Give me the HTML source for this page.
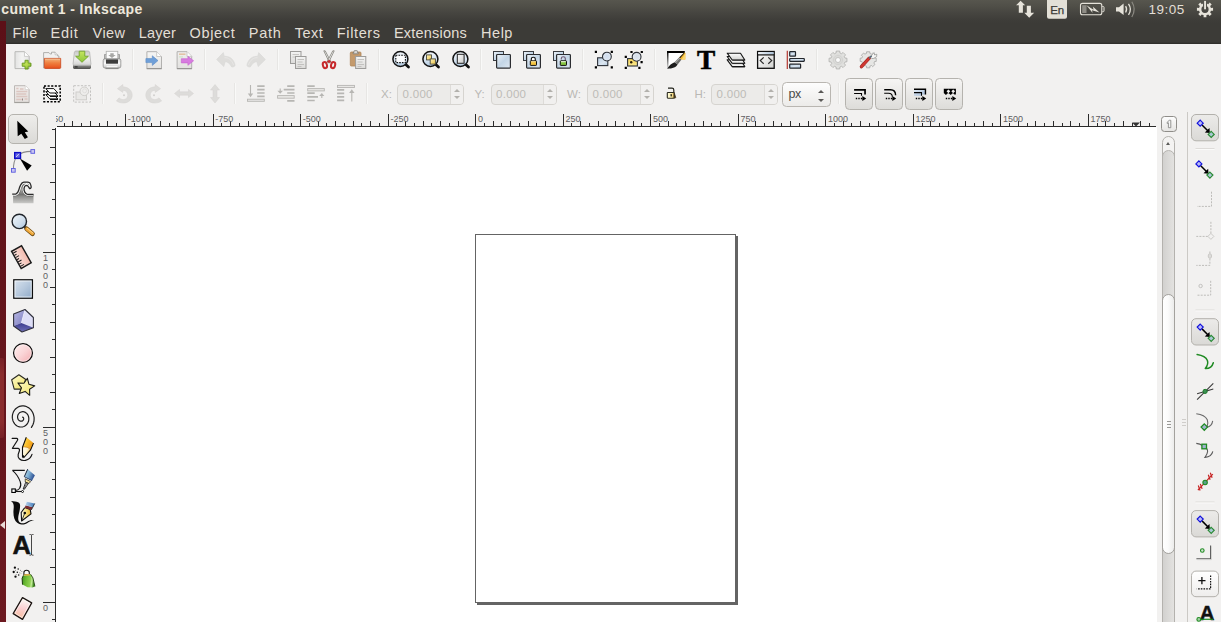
<!DOCTYPE html>
<html lang="en"><head><meta charset="utf-8"><title>Document 1 - Inkscape</title>
<style>
*{margin:0;padding:0;box-sizing:border-box}
html,body{width:1221px;height:622px;overflow:hidden;background:#f2f1f0;font-family:"Liberation Sans","DejaVu Sans",sans-serif}
body{position:relative}
#top{position:absolute;left:0;top:0;width:1221px;height:44px;background:linear-gradient(#57564e 0,#504f48 6px,#464540 13px,#3e3d39 20px,#3c3b37 23px,#3c3b37 42px,#33322f 43px,#2c2b28 44px);color:#dfdbd2;overflow:hidden}
#top .title{position:absolute;left:1.3px;top:0;font-size:14px;font-weight:bold;line-height:18px;color:#eee8dc;white-space:nowrap;letter-spacing:.4px}
#top .mi{position:absolute;top:24px;height:18px;line-height:18px;font-size:14.5px;color:#e3dfd6;white-space:nowrap}
#top .clock{position:absolute;left:1148.6px;top:0;font-size:13.5px;line-height:19px;color:#e3dfd6;letter-spacing:.45px}
#launcher{position:absolute;left:0;top:21px;width:6px;height:601px;background:linear-gradient(180deg,#5c1017,#6c1920)}
#launcher .gl{position:absolute;left:0;top:337px;width:3.5px;height:80px;border-radius:0 2px 2px 0;background:linear-gradient(#762026,#8a2c2d 20%,#8a2c2d 80%,#762026)}
#launcher .tri{position:absolute;left:0;top:499.5px;width:0;height:0;border-top:4px solid transparent;border-bottom:4px solid transparent;border-right:5px solid #e9dbd7}
#ledge{position:absolute;left:6px;top:44px;width:1px;height:578px;background:#f7eeee}
#tb{position:absolute;left:0;top:0;width:1221px;height:112px}
.ic{position:absolute;width:24px;height:24px}
.ic svg{display:block;width:24px;height:24px;overflow:visible}
.sep{position:absolute;width:1px;background:#e7e6e4;box-shadow:1px 0 0 #f9f9f8}
.lbl{position:absolute;top:87px;font-size:11.5px;line-height:14px;color:#bab8b4}
.spin{position:absolute;top:83.5px;height:21px;border:1px solid #d6d4d0;border-radius:4px;background:#ecebe9}
.spin .val{position:absolute;left:4.5px;top:3px;font-size:11.5px;line-height:13px;color:#bdbbb7;letter-spacing:.3px}
.spin .sp{position:absolute;right:0;top:0;width:13.5px;height:19px;border-left:1px solid #dddbd8;background:#f1f0ef;border-radius:0 3px 3px 0}
.up,.dn{position:absolute;width:0;height:0;border-left:2.5px solid transparent;border-right:2.5px solid transparent}
.spin .up{left:3.8px;top:4.2px;border-left:3.2px solid transparent;border-right:3.2px solid transparent;border-bottom:3.8px solid #b3b1ad}
.spin .dn{left:3.8px;top:11.8px;border-left:3.2px solid transparent;border-right:3.2px solid transparent;border-top:3.8px solid #b3b1ad}
.combo{position:absolute;top:82px;width:49px;height:24.5px;border:1px solid #b9b6b1;border-radius:4.5px;background:linear-gradient(#fdfdfd,#ecebe9)}
.combo span{position:absolute;left:6px;top:4px;font-size:12.5px;line-height:14px;color:#4a4a48;letter-spacing:-.5px}
.combo .up{left:35.3px;top:6.8px;border-left:3px solid transparent;border-right:3px solid transparent;border-bottom:3.6px solid #5a5957}
.combo .dn{left:35.3px;top:15.8px;border-left:3px solid transparent;border-right:3px solid transparent;border-top:3.6px solid #5a5957}
.tbtn{position:absolute;top:78px;width:28px;height:31.5px;border:1px solid #b5b3ae;border-radius:4.5px;background:linear-gradient(#f6f5f4,#dddcd9)}
.tbtn svg{position:absolute;left:-1px;top:-1px;width:28px;height:32px}
.selbtn{position:absolute;border:1px solid #b5b3ae;border-radius:5px;background:linear-gradient(#eeedeb,#dbdad7)}
#hr,#vr{position:absolute;display:block}
#hr text,#vr text{font-family:"Liberation Sans",sans-serif;font-size:9px;fill:#5e5e62}
#canvas{position:absolute;left:56px;top:127px;width:1101px;height:495px;background:#fff}
#page{position:absolute;left:419px;top:107px;width:261px;height:369px;border:1px solid #646464;box-shadow:2px 2px 0 #646464;background:#fff}
#zoombtn{position:absolute;left:1161px;top:116px;width:16px;height:16px;border:1px solid #8f8d89;border-radius:3.5px;background:linear-gradient(#fdfdfd,#e6e5e3)}
#zoombtn svg{position:absolute;left:-1px;top:-1px;width:16px;height:16px}
#vscroll{position:absolute;left:1162px;top:136px;width:13px;height:500px;border:1px solid #b4b2ae;border-radius:6.5px;background:#f4f3f2;overflow:hidden}
#trough{position:absolute;left:-1px;top:12.5px;width:13px;height:500px;border:1px solid #b4b2ae;border-radius:6.5px;background:linear-gradient(90deg,#d2d1cf,#e3e2e0)}
#vscroll .up{left:3px;top:4.8px;border-left-width:2.5px;border-right-width:2.5px;border-bottom:3px solid #5a5a58}
#thumb{position:absolute;left:1162px;top:294px;width:13px;height:259.5px;border:1px solid #a3a19d;border-radius:6.5px;background:linear-gradient(90deg,#ffffff,#fbfbfb 45%,#ececeb)}
#thumb i{position:absolute;left:3.5px;width:4px;height:1px;background:#9a9996}
#thumb i:nth-child(1){top:125.5px}#thumb i:nth-child(2){top:128.5px}#thumb i:nth-child(3){top:131.5px}
.vsep{position:absolute;width:1px;background:#cbc9c5}
#grip{position:absolute;left:1182px;top:419px}
#grip i{position:absolute;left:0;width:4px;height:1px;background:#cfcdca}
#grip i:nth-child(1){top:0}#grip i:nth-child(2){top:3px}#grip i:nth-child(3){top:6px}

</style></head>
<body>
<div id="top">
<span class="title">cument 1 - Inkscape</span>
<span class="mi" style="left:12.6px;letter-spacing:0.43px">File</span>
<span class="mi" style="left:50.5px;letter-spacing:0.8px">Edit</span>
<span class="mi" style="left:92.5px;letter-spacing:0.47px">View</span>
<span class="mi" style="left:138.8px;letter-spacing:0.18px">Layer</span>
<span class="mi" style="left:189.5px;letter-spacing:0.68px">Object</span>
<span class="mi" style="left:248.8px;letter-spacing:0.7px">Path</span>
<span class="mi" style="left:294.8px;letter-spacing:0.43px">Text</span>
<span class="mi" style="left:336.8px;letter-spacing:0.63px">Filters</span>
<span class="mi" style="left:394.0px;letter-spacing:0.19px">Extensions</span>
<span class="mi" style="left:481.1px;letter-spacing:0.5px">Help</span>
<svg id="ind" width="221" height="22" viewBox="1000 0 221 22" style="position:absolute;left:1000px;top:0;display:block"><path d="M1020.600 .8L1025.200 5.200H1022.900V12.700H1018.800V5.200H1016.100Z" fill="#e6e3da"/><path d="M1026.800 5.700H1030.900V12.700H1034.200L1029.200 17.700 1024.300 12.700H1026.800Z" fill="#e6e3da"/><path d="M1047 0H1067V16.700Q1067 18.700 1065 18.700H1049Q1047 18.700 1047 16.700Z" fill="#e3e0d7"/><text x="1057.100" y="13.600" text-anchor="middle" font-family="Liberation Sans,DejaVu Sans,sans-serif" font-size="11.500" fill="#3c3b37" stroke="#3c3b37" stroke-width=".25" letter-spacing="-.3">En</text><rect x="1080.500" y="3.400" width="21.300" height="11.400" rx="2" fill="none" stroke="#e6e3da" stroke-width="1.100"/><path d="M1102.300 6.500H1103.200Q1104 6.500 1104 7.300V10.900Q1104 11.700 1103.200 11.700H1102.300" fill="none" stroke="#e6e3da" stroke-width="1"/><rect x="1082.200" y="5.200" width="4.300" height="7.800" fill="#8e8c85"/><path d="M1086.500 5.200L1093.500 9.800 1093 6.800 1099.500 12.500 1092 10.200 1092.600 13Z" fill="#e6e3da"/><path d="M1116 7.200H1119L1123.600 3.600V15L1119 11.600H1116Z" fill="#e6e3da"/><path d="M1125.600 6.200Q1127.600 9.300 1125.600 12.500" fill="none" stroke="#e6e3da" stroke-width="1.300"/><path d="M1128.500 3.800Q1132.300 9.300 1128.500 14.900" fill="none" stroke="#e6e3da" stroke-width="1.300"/><path d="M1131.800 1.800Q1136.600 9.300 1131.800 17" fill="none" stroke="#8b8982" stroke-width="1.200"/><path d="M1203.93 3.29L1206.07 3.29L1206.35 3.35L1208.25 4.14L1209.69 2.57L1211.73 4.61L1210.16 6.05L1210.95 7.95L1213.07 7.86L1213.07 10.74L1210.95 10.65L1210.16 12.55L1211.73 13.99L1209.69 16.03L1208.25 14.46L1206.35 15.25L1206.44 17.37L1203.56 17.37L1203.65 15.25L1201.75 14.46L1200.31 16.03L1198.27 13.99L1199.84 12.55L1199.05 10.65L1196.93 10.74L1196.93 7.86L1199.05 7.95L1199.84 6.05L1198.27 4.61L1200.31 2.57L1201.75 4.14L1203.65 3.35ZM1208.600 9.300A3.600 3.600 0 1 0 1201.400 9.300A3.600 3.600 0 1 0 1208.600 9.300Z" fill="#e6e3da" fill-rule="evenodd"/><rect x="1203" y="0" width="4" height="6.500" fill="#56554e"/><rect x="1204.100" y=".9" width="1.900" height="8.400" fill="#e6e3da"/></svg>
<span class="clock">19:05</span>
</div>
<div id="launcher"><i class="gl"></i><i class="tri"></i></div><div id="ledge"></div>
<div id="tb">
<div class="ic" style="left:10px;top:48px"><svg viewBox="0 0 24 24"><defs><linearGradient id="gnw" x1="0" y1="0" x2="1" y2="0"><stop offset="0" stop-color="#e3e3e2"/><stop offset=".5" stop-color="#f4f4f3"/><stop offset="1" stop-color="#e6e6e5"/></linearGradient><radialGradient id="gnp" cx=".45" cy=".4" r=".6"><stop offset="0" stop-color="#c3e15c"/><stop offset=".7" stop-color="#a0cd3c"/><stop offset="1" stop-color="#6f9d24"/></radialGradient></defs>
<path d="M5 3.7H14.5L19.2 8.4V20.6H5Z" fill="url(#gnw)" stroke="#b9b9b7" stroke-width="1"/><path d="M14.5 3.7V8.4H19.2" fill="#fff" stroke="#c4c4c2" stroke-width=".8"/>
<path d="M15 12.3h3.2v2.8h2.8v3.2h-2.8v2.8H15v-2.8h-2.8v-3.2H15z" fill="url(#gnp)" stroke="#6c9a26" stroke-width=".9" stroke-linejoin="round"/></svg></div>
<div class="ic" style="left:40px;top:48px"><svg viewBox="0 0 24 24"><defs><linearGradient id="gop" x1="0" y1="0" x2="0" y2="1"><stop offset="0" stop-color="#f3b57e"/><stop offset=".45" stop-color="#ef8040"/><stop offset="1" stop-color="#e8501c"/></linearGradient></defs>
<path d="M3.6 20V4.6H9l1.2 1.4h1.3V4.2h3.6l2.6 2.6v1.2h1.2V20Z" fill="#f1f1f0" stroke="#a9a9a7" stroke-width=".9"/><path d="M15.1 4.2v2.6h2.6" fill="#fff" stroke="#b5b5b3" stroke-width=".7"/>
<path d="M4.4 10.4H20.7V19.6Q20.7 20.4 19.9 20.4H5.2Q4.4 20.4 4.4 19.6Z" fill="url(#gop)" stroke="#c8441a" stroke-width=".8"/><path d="M5 11.2H20" stroke="#f5c39a" stroke-width=".8"/></svg></div>
<div class="ic" style="left:70px;top:48px"><svg viewBox="0 0 24 24"><defs><linearGradient id="gsv" x1="0" y1="0" x2="0" y2="1"><stop offset="0" stop-color="#c9c9c8"/><stop offset=".6" stop-color="#eeeeed"/><stop offset="1" stop-color="#d6d6d5"/></linearGradient><linearGradient id="gsv2" x1="0" y1="0" x2="0" y2="1"><stop offset="0" stop-color="#9b9b99"/><stop offset="1" stop-color="#4e4e4c"/></linearGradient><linearGradient id="gsv3" x1="0" y1="0" x2="0" y2="1"><stop offset="0" stop-color="#c6e660"/><stop offset="1" stop-color="#8cc63a"/></linearGradient></defs>
<path d="M6 3H18Q19.3 3 19.6 4.2L21 16.5H3L4.4 4.2Q4.7 3 6 3Z" fill="url(#gsv)" stroke="#b4b4b2" stroke-width=".8"/>
<path d="M3 16.5H21V19.6Q21 20.9 19.7 20.9H4.3Q3 20.9 3 19.6Z" fill="url(#gsv2)"/><path d="M3.3 16.9H20.7" stroke="#e9e9e8" stroke-width=".9"/><path d="M4.6 18.9h3" stroke="#222" stroke-width="1"/>
<path d="M9.2 3.2h5.6v5h3.6L12 14.3 5.6 8.2h3.6z" fill="url(#gsv3)" stroke="#6fa32c" stroke-width=".9" stroke-linejoin="round"/></svg></div>
<div class="ic" style="left:100px;top:48px"><svg viewBox="0 0 24 24"><defs><linearGradient id="gpr" x1="0" y1="0" x2="0" y2="1"><stop offset="0" stop-color="#d8d8d7"/><stop offset=".5" stop-color="#fbfbfb"/><stop offset="1" stop-color="#c4c4c3"/></linearGradient></defs>
<path d="M4.5 6.5h2v-1h11v1h2V13h-15z" fill="#bdbdbb" stroke="#8a8a88" stroke-width=".7"/>
<rect x="6.2" y="3.3" width="11.6" height="9" fill="#fbfbfb" stroke="#b0b0ae" stroke-width=".8"/>
<path d="M10.3 5.2h3.4v1.9h2L12 9.9 8.3 7.100h2z" fill="#a7a7a5"/>
<rect x="3.2" y="10.700" width="17.600" height="9.300" rx="1.800" fill="url(#gpr)" stroke="#8c8c8a" stroke-width=".8"/>
<rect x="6" y="11.400" width="12" height="4.300" fill="#3d3d3c"/>
<path d="M5.500 20.500h13" stroke="#8b8b89" stroke-width="1.200"/><path d="M6.500 18.700h11" stroke="#fff" stroke-width="1"/></svg></div>
<i class="sep" style="left:132.0px;top:48.5px;height:21px"></i>
<div class="ic" style="left:142px;top:48px"><svg viewBox="0 0 24 24"><defs><linearGradient id="gim" x1="0" y1="0" x2="0" y2="1"><stop offset="0" stop-color="#f6f6f5"/><stop offset="1" stop-color="#e4e3e1"/></linearGradient></defs>
<path d="M4.900 3.700H14.700L19.500 8.500V20.600H4.900Z" fill="url(#gim)" stroke="#b2b1af" stroke-width="1"/><path d="M14.700 3.700V8.500H19.500" fill="#fff" stroke="#c0bfbd" stroke-width=".8"/><path d="M4.700 20.700H19.700" stroke="#8f8e8c" stroke-width="1"/>
<path d="M3.900 10.600h6.400V7.800l5.700 4.800-5.700 4.800v-2.800H3.900z" fill="#6f9fd8" stroke="#5d8cc6" stroke-width=".6" stroke-linejoin="round"/></svg></div>
<div class="ic" style="left:172.5px;top:48px"><svg viewBox="0 0 24 24"><defs><linearGradient id="gex" x1="0" y1="0" x2="0" y2="1"><stop offset="0" stop-color="#f1f0ee"/><stop offset="1" stop-color="#e2e1df"/></linearGradient></defs>
<path d="M4.100 3.700H14L18.700 8.400V20.600H4.100Z" fill="url(#gex)" stroke="#b2b1af" stroke-width="1"/><path d="M14 3.700V8.400H18.700" fill="#fff" stroke="#c0bfbd" stroke-width=".8"/><path d="M3.900 20.700H18.900" stroke="#8f8e8c" stroke-width="1"/>
<path d="M6 6.200h6.500" stroke="#e2c3a6" stroke-width="1.600"/><path d="M6 8.900h4" stroke="#cfe4c8" stroke-width="1.200"/>
<path d="M8.300 10.700h6.600V8.300l5.700 4.500-5.700 4.500v-2.400H8.300z" fill="#d87be0" stroke="#c462cf" stroke-width=".6" stroke-linejoin="round"/></svg></div>
<i class="sep" style="left:204.0px;top:48.5px;height:21px"></i>
<div class="ic" style="left:214px;top:48px"><svg viewBox="0 0 24 24"><path d="M2.600 11.500L9.300 4.600 10.300 8.300C13 8.300 15 8.800 16.500 9.800C19 11.500 20.500 14 21.100 17.200C21 18.500 19 19.300 17.600 18.900C16.500 17 15.500 15.600 14.500 14.900C13.500 14.200 12.500 13.800 11.200 13.700L9.800 18.600Z" fill="#dedddb" stroke="#d9d8d6" stroke-width=".6" stroke-linejoin="round"/><path d="M10.500 9.600C14.500 9.600 18 12 19.500 17" stroke="#e8e7e5" stroke-width=".9" fill="none"/></svg></div>
<div class="ic" style="left:244px;top:48px"><svg viewBox="0 0 24 24"><g transform="translate(24,0) scale(-1,1)"><path d="M2.600 11.500L9.300 4.600 10.300 8.300C13 8.300 15 8.800 16.500 9.800C19 11.500 20.500 14 21.100 17.200C21 18.500 19 19.300 17.600 18.900C16.500 17 15.500 15.600 14.500 14.900C13.500 14.200 12.500 13.800 11.200 13.700L9.800 18.600Z" fill="#dedddb" stroke="#d9d8d6" stroke-width=".6" stroke-linejoin="round"/><path d="M10.500 9.600C14.500 9.600 18 12 19.500 17" stroke="#e8e7e5" stroke-width=".9" fill="none"/></g></svg></div>
<i class="sep" style="left:276.5px;top:48.5px;height:21px"></i>
<div class="ic" style="left:286px;top:48px"><svg viewBox="0 0 24 24"><defs><linearGradient id="gcp" x1="0" y1="0" x2="0" y2="1"><stop offset="0" stop-color="#f4f4f3"/><stop offset="1" stop-color="#dcdbd9"/></linearGradient></defs>
<rect x="4.500" y="3.500" width="10.500" height="12" fill="url(#gcp)" stroke="#9d9c9a" stroke-width="1"/><path d="M6.500 6.500h6.500M6.500 9h4" stroke="#c3c2c0" stroke-width=".9"/>
<rect x="9.500" y="8.500" width="10.500" height="12" fill="url(#gcp)" stroke="#9d9c9a" stroke-width="1"/><path d="M11.500 11.500h6.500M11.500 14h5M11.500 16.500h6.500M11.500 18.500h4" stroke="#bdbcba" stroke-width=".9"/></svg></div>
<div class="ic" style="left:316.5px;top:48px"><svg viewBox="0 0 24 24"><path d="M6.800 2.800L8.200 2.800 14 14 12.600 15Z" fill="#f2f2f0" stroke="#6e6d66" stroke-width=".7" stroke-linejoin="round"/><path d="M17.200 2.800L15.800 2.800 10 14 11.400 15Z" fill="#fafaf8" stroke="#6e6d66" stroke-width=".7" stroke-linejoin="round"/>
<ellipse cx="7.900" cy="17.100" rx="2" ry="3.100" transform="rotate(-16 7.900 17.100)" fill="none" stroke="#c6282b" stroke-width="2"/><ellipse cx="16.100" cy="17.100" rx="2" ry="3.100" transform="rotate(16 16.100 17.100)" fill="none" stroke="#c6282b" stroke-width="2"/><path d="M9.800 13.600L12 11.800 14.200 13.600 12 15Z" fill="#c6282b"/></svg></div>
<div class="ic" style="left:346px;top:48px"><svg viewBox="0 0 24 24"><defs><linearGradient id="gps" x1="0" y1="0" x2="0" y2="1"><stop offset="0" stop-color="#f4f4f3"/><stop offset="1" stop-color="#dcdbd9"/></linearGradient></defs>
<rect x="4.300" y="4" width="10.700" height="14" rx="1" fill="#c49a6c" stroke="#b08658" stroke-width=".8"/><path d="M8 4.500V3.200Q8 2.600 8.600 2.600H10.800Q11.400 2.600 11.400 3.200V4.500H12.300V5.800H7.100V4.500Z" fill="#d9d8d6" stroke="#77766f" stroke-width=".7"/>
<rect x="9.600" y="8.500" width="10.200" height="12" fill="url(#gps)" stroke="#9d9c9a" stroke-width="1"/><path d="M11.500 11.500h6.500M11.500 14h5M11.500 16.500h6.500M11.500 18.500h4" stroke="#bdbcba" stroke-width=".9"/></svg></div>
<i class="sep" style="left:378.0px;top:48.5px;height:21px"></i>
<div class="ic" style="left:388.5px;top:48px"><svg viewBox="0 0 24 24"><defs><linearGradient id="gza" x1="0" y1="0" x2="0" y2="1"><stop offset="0" stop-color="#f3f6fa"/><stop offset=".6" stop-color="#d5e2ef"/><stop offset="1" stop-color="#aec8e0"/></linearGradient></defs><path d="M16.800 16.400L19.500 19" stroke="#111" stroke-width="2.800" stroke-linecap="round"/><circle cx="11.400" cy="11" r="7.500" fill="url(#gza)" stroke="#111" stroke-width="1.500"/><rect x="6.800" y="7.200" width="9.600" height="7.400" fill="#fff" fill-opacity=".9" stroke="#111" stroke-width="1.100" stroke-dasharray="1.600 1.100"/></svg></div>
<div class="ic" style="left:418.5px;top:48px"><svg viewBox="0 0 24 24"><defs><linearGradient id="gzy" x1="0" y1="0" x2="1" y2="1"><stop offset="0" stop-color="#fbf2c0"/><stop offset="1" stop-color="#f0c644"/></linearGradient></defs><defs><linearGradient id="gzb" x1="0" y1="0" x2="0" y2="1"><stop offset="0" stop-color="#f3f6fa"/><stop offset=".6" stop-color="#d5e2ef"/><stop offset="1" stop-color="#aec8e0"/></linearGradient></defs><path d="M16.800 16.400L19.500 19" stroke="#111" stroke-width="2.800" stroke-linecap="round"/><circle cx="11.400" cy="11" r="7.500" fill="url(#gzb)" stroke="#111" stroke-width="1.500"/><rect x="7.500" y="6.900" width="5" height="5" fill="url(#gzy)" stroke="#4b4a3e" stroke-width=".9"/><rect x="11.200" y="10.900" width="5.200" height="5.200" fill="url(#gzy)" stroke="#4b4a3e" stroke-width=".9"/></svg></div>
<div class="ic" style="left:448.5px;top:48px"><svg viewBox="0 0 24 24"><defs><linearGradient id="gzp" x1="0" y1="0" x2="1" y2="1"><stop offset="0" stop-color="#fff"/><stop offset="1" stop-color="#c9c9c7"/></linearGradient></defs><defs><linearGradient id="gzc" x1="0" y1="0" x2="0" y2="1"><stop offset="0" stop-color="#f3f6fa"/><stop offset=".6" stop-color="#d5e2ef"/><stop offset="1" stop-color="#aec8e0"/></linearGradient></defs><path d="M16.800 16.400L19.500 19" stroke="#111" stroke-width="2.800" stroke-linecap="round"/><circle cx="11.400" cy="11" r="7.500" fill="url(#gzc)" stroke="#111" stroke-width="1.500"/><rect x="8.300" y="6.300" width="6.800" height="9" fill="url(#gzp)" stroke="#222" stroke-width="1"/></svg></div>
<i class="sep" style="left:480.0px;top:48.5px;height:21px"></i>
<div class="ic" style="left:490px;top:48px"><svg viewBox="0 0 24 24"><defs><linearGradient id="gda" x1="0" y1="0" x2="1" y2="1"><stop offset="0" stop-color="#eef3f8"/><stop offset=".5" stop-color="#c3d5e6"/><stop offset="1" stop-color="#dfe8f1"/></linearGradient></defs><rect x="3.500" y="3.500" width="10" height="9" fill="url(#gda)" stroke="#3a3d42" stroke-width="1"/><rect x="6.600" y="6.500" width="13.800" height="13.600" rx=".8" fill="url(#gda)" stroke="#2b2d31" stroke-width="1.200"/></svg></div>
<div class="ic" style="left:520px;top:48px"><svg viewBox="0 0 24 24"><defs><linearGradient id="gdb" x1="0" y1="0" x2="1" y2="1"><stop offset="0" stop-color="#eef3f8"/><stop offset=".5" stop-color="#c3d5e6"/><stop offset="1" stop-color="#dfe8f1"/></linearGradient></defs><rect x="3.500" y="3.500" width="10" height="9" fill="url(#gdb)" stroke="#3a3d42" stroke-width="1"/><rect x="6.600" y="6.500" width="13.800" height="13.600" rx=".8" fill="url(#gdb)" stroke="#2b2d31" stroke-width="1.200"/><path d="M11.300 13V11.200Q11.300 9.300 13.300 9.300Q15.300 9.300 15.300 11.200V13" fill="#fff" stroke="#111" stroke-width="1.100"/><rect x="10.300" y="12.800" width="6.200" height="4.600" rx=".6" fill="#f3c33f" stroke="#111" stroke-width="1"/><path d="M11 13.700h4.800" stroke="#fae9a8" stroke-width=".9"/></svg></div>
<div class="ic" style="left:550px;top:48px"><svg viewBox="0 0 24 24"><defs><linearGradient id="gdc" x1="0" y1="0" x2="1" y2="1"><stop offset="0" stop-color="#eef3f8"/><stop offset=".5" stop-color="#c3d5e6"/><stop offset="1" stop-color="#dfe8f1"/></linearGradient></defs><rect x="3.500" y="3.500" width="10" height="9" fill="url(#gdc)" stroke="#3a3d42" stroke-width="1"/><rect x="6.600" y="6.500" width="13.800" height="13.600" rx=".8" fill="url(#gdc)" stroke="#2b2d31" stroke-width="1.200"/><path d="M11.300 11.500V10.500Q11.300 8.700 13.300 8.700Q15.300 8.700 15.300 10.500V13" fill="none" stroke="#6a5570" stroke-width="1.100"/><rect x="10.300" y="12.800" width="6.200" height="4.600" rx=".6" fill="#86c440" stroke="#111" stroke-width="1"/><path d="M11 13.700h4.800" stroke="#f4f8e8" stroke-width="1"/></svg></div>
<i class="sep" style="left:582.0px;top:48.5px;height:21px"></i>
<div class="ic" style="left:592px;top:48px"><svg viewBox="0 0 24 24"><defs><linearGradient id="ggr" x1="0" y1="0" x2="1" y2="1"><stop offset="0" stop-color="#b9cde2"/><stop offset=".6" stop-color="#dde7f1"/><stop offset="1" stop-color="#b4c9de"/></linearGradient><radialGradient id="ggr2" cx=".5" cy=".45" r=".6"><stop offset="0" stop-color="#cfdcee"/><stop offset="1" stop-color="#e4ebf3"/></radialGradient></defs>
<rect x="5.600" y="9.800" width="10.200" height="7.800" fill="url(#ggr)" stroke="#2d3138" stroke-width="1.100"/><circle cx="14.900" cy="8.600" r="4.400" fill="url(#ggr2)" stroke="#2d3138" stroke-width="1.100"/>
<path d="M2.800 2.800h2.200v2.200h-2.200zM18.700 2.800h2.200v2.200h-2.200zM2.800 18.300h2.200v2.200h-2.200zM18.700 18.300h2.200v2.200h-2.200z" fill="#000"/></svg></div>
<div class="ic" style="left:622px;top:48px"><svg viewBox="0 0 24 24"><defs><linearGradient id="gug" x1="0" y1="0" x2="0" y2="1"><stop offset="0" stop-color="#f5d457"/><stop offset="1" stop-color="#fae88f"/></linearGradient><radialGradient id="gug2" cx=".5" cy=".45" r=".6"><stop offset="0" stop-color="#d6dfea"/><stop offset="1" stop-color="#e6ecf3"/></radialGradient></defs>
<rect x="5.600" y="10.600" width="9.800" height="7.400" fill="url(#gug)" stroke="#2d3138" stroke-width="1.100"/><circle cx="14.600" cy="8.800" r="4.400" fill="url(#gug2)" stroke="#2d3138" stroke-width="1.100"/><circle cx="9.200" cy="14.200" r="1.200" fill="#2a1d05"/>
<path d="M8.400 2.900h2.200v2.200h-2.200zM18.700 2.900h2.200v2.200h-2.200zM2.700 7.700h2.200v2.200h-2.200zM18.500 13.100h2.200v2.200h-2.200zM2.700 18.800h2.200v2.200h-2.200zM16.300 18.800h2.200v2.200h-2.200z" fill="#000"/></svg></div>
<i class="sep" style="left:654.0px;top:48.5px;height:21px"></i>
<div class="ic" style="left:664px;top:48px"><svg viewBox="0 0 24 24"><defs><linearGradient id="gfl" x1="0" y1="0" x2="0" y2="1"><stop offset="0" stop-color="#000"/><stop offset="1" stop-color="#000" stop-opacity=".1"/></linearGradient></defs>
<path d="M3.500 3.800H20.500L3.500 20.500Z" fill="#fff"/><path d="M3 3h17.800v2H3z" fill="#000"/><path d="M3 3h1.500v17.800H3z" fill="url(#gfl)"/>
<path d="M3.200 20.800C5 17.500 8 15 10.600 14.200L13.600 16.600C12.500 19 8.500 20.800 3.200 20.800Z" fill="#1c1c1c"/><path d="M10.600 14.200L15.200 9.400 17.600 11.600 13.600 16.600Z" fill="#6d6d6b"/><path d="M11.500 14.800L15.900 10.100" stroke="#bdbdbb" stroke-width=".8"/>
<path d="M15.200 9.400L20.400 4.200 21.300 5.300V11.500L17.600 11.600Z" fill="#f5b62a"/><path d="M15.200 9.400L20.400 4.200 20.900 4.800 16.200 10.300Z" fill="#222"/><path d="M17.600 11.600L21.300 11.500V5.300Z" fill="#fbd872"/></svg></div>
<div class="ic" style="left:694px;top:48px"><svg viewBox="0 0 24 24"><text x="12" y="20.800" text-anchor="middle" font-family="Liberation Serif,DejaVu Serif,serif" font-weight="bold" font-size="27.300" fill="#000" stroke="#000" stroke-width=".55">T</text></svg></div>
<div class="ic" style="left:724px;top:48px"><svg viewBox="0 0 24 24"><defs><linearGradient id="gly" x1="0" y1="0" x2="0" y2="1"><stop offset="0" stop-color="#fff"/><stop offset="1" stop-color="#d2d2d0"/></linearGradient></defs>
<g stroke="#151515" stroke-width="1.100" stroke-linejoin="round"><path d="M3.200 11.800H16.500L20.800 18.600H8.200Z" fill="#f4f4f3"/><path d="M3.200 8.500H16.500L20.800 15.300H8.200Z" fill="#f4f4f3"/><path d="M3.200 5.200H16.500L20.800 12H8.200Z" fill="url(#gly)"/></g><path d="M8.400 18.900H20.800M8.400 15.600H20.800M8.400 12.300H20.800" stroke="#151515" stroke-width=".7"/></svg></div>
<div class="ic" style="left:754px;top:48px"><svg viewBox="0 0 24 24"><defs><linearGradient id="gxm" x1="0" y1="0" x2="1" y2="1"><stop offset="0" stop-color="#fff"/><stop offset="1" stop-color="#d2d2d0"/></linearGradient><linearGradient id="gxm2" x1="0" y1="0" x2="1" y2="0"><stop offset="0" stop-color="#f4f7fa"/><stop offset="1" stop-color="#a9c1da"/></linearGradient></defs>
<rect x="3.600" y="3.500" width="16.600" height="16.800" fill="url(#gxm)" stroke="#0e0e0e" stroke-width="1.300"/><rect x="4.300" y="4.200" width="15.200" height="2" fill="url(#gxm2)"/><path d="M3.600 6.900H20.200" stroke="#0e0e0e" stroke-width="1.200"/>
<path d="M9.700 9.400L6.300 12.600 9.700 15.800M14.300 9.400L17.700 12.600 14.300 15.800" fill="none" stroke="#2a2a2a" stroke-width="1.200"/></svg></div>
<div class="ic" style="left:784px;top:48px"><svg viewBox="0 0 24 24"><defs><linearGradient id="gal" x1="0" y1="0" x2="1" y2="1"><stop offset="0" stop-color="#a9c1da"/><stop offset=".5" stop-color="#dbe6f1"/><stop offset="1" stop-color="#a9c1da"/></linearGradient></defs>
<path d="M3.300 2.800V21" stroke="#b3372f" stroke-width="1.200"/>
<rect x="5.700" y="3.700" width="5.800" height="4.500" rx=".5" fill="url(#gal)" stroke="#24272c" stroke-width="1.200"/><rect x="5.700" y="10.500" width="14.600" height="2.800" rx=".5" fill="url(#gal)" stroke="#24272c" stroke-width="1.200"/><rect x="5.700" y="16.200" width="10.900" height="4" rx=".5" fill="url(#gal)" stroke="#24272c" stroke-width="1.200"/></svg></div>
<i class="sep" style="left:816.0px;top:48.5px;height:21px"></i>
<div class="ic" style="left:826px;top:48px"><svg viewBox="0 0 24 24"><defs><radialGradient id="gpf" cx=".5" cy=".5" r=".5"><stop offset="0" stop-color="#d4d4d2"/><stop offset="1" stop-color="#e4e4e2"/></radialGradient></defs><path d="M20.93 10.22L20.93 13.78L19.06 13.87L18.31 15.67L19.57 17.06L17.06 19.57L15.67 18.31L13.87 19.06L13.78 20.93L10.22 20.93L10.13 19.06L8.33 18.31L6.94 19.57L4.43 17.06L5.69 15.67L4.94 13.87L3.07 13.78L3.07 10.22L4.94 10.13L5.69 8.33L4.43 6.94L6.94 4.43L8.33 5.69L10.13 4.94L10.22 3.07L13.78 3.07L13.87 4.94L15.67 5.69L17.06 4.43L19.57 6.94L18.31 8.33L19.06 10.13Z" fill="url(#gpf)" stroke="#adadab" stroke-width=".8" stroke-linejoin="round"/><circle cx="12" cy="12" r="4.600" fill="none" stroke="#d0d0ce" stroke-width=".8"/><circle cx="12" cy="12" r="2.500" fill="#fbfbfb" stroke="#bcbcba" stroke-width=".8"/></svg></div>
<div class="ic" style="left:856px;top:48px"><svg viewBox="0 0 24 24"><path d="M20.24 10.20L20.24 13.40L18.58 13.49L17.91 15.11L19.02 16.36L16.76 18.62L15.51 17.51L13.89 18.18L13.80 19.84L10.60 19.84L10.51 18.18L8.89 17.51L7.64 18.62L5.38 16.36L6.49 15.11L5.82 13.49L4.16 13.40L4.16 10.20L5.82 10.11L6.49 8.49L5.38 7.24L7.64 4.98L8.89 6.09L10.51 5.42L10.60 3.76L13.80 3.76L13.89 5.42L15.51 6.09L16.76 4.98L19.02 7.24L17.91 8.49L18.58 10.11Z" fill="#e6e6e4" stroke="#a6a6a4" stroke-width=".8" stroke-linejoin="round"/><path d="M14.500 9.200L17 5.500 18.200 4.600 18.600 7 20.800 6.200 20.600 8.600 17.800 10.400 15.800 10.600Z" fill="#f7f7f6" stroke="#8c8c8a" stroke-width=".7" stroke-linejoin="round"/><path d="M5.400 18.700L13.200 10.200" stroke="#a52420" stroke-width="3.300" stroke-linecap="round"/><path d="M5.400 18.700L13.200 10.200" stroke="#cf3832" stroke-width="2.200" stroke-linecap="round"/><path d="M13 10.300L15.600 7.800" stroke="#5a6a78" stroke-width="1.600"/></svg></div>
<div class="ic" style="left:10px;top:82px"><svg viewBox="0 0 24 24"><defs><linearGradient id="gsa" x1="0" y1="0" x2="0" y2="1"><stop offset="0" stop-color="#f0ecea"/><stop offset="1" stop-color="#e3dfdd"/></linearGradient></defs>
<path d="M4.500 3.700H15.200L19.100 7.600V20.300H4.500Z" fill="url(#gsa)" stroke="#bcb8b5" stroke-width="1"/><path d="M15.200 3.700V7.600H19.100" fill="#fff" stroke="#cfcbc8" stroke-width=".7"/><path d="M4.300 20.600H19.300" stroke="#9a9794" stroke-width=".9"/>
<path d="M6.300 6.500h2.200M10 7h3.500M6.300 9.500h11M6.300 12h10M6.300 14.500h11M6.300 17.500h5.500M14.500 17h3" stroke="#dcc6c1" stroke-width="1.300"/><path d="M12.500 16.500v2" stroke="#8a7a78" stroke-width=".9"/></svg></div>
<div class="ic" style="left:40px;top:82px"><svg viewBox="0 0 24 24"><rect x="4" y="4" width="16.200" height="15.800" fill="none" stroke="#000" stroke-width="1.500" stroke-dasharray="2.100 1.500"/>
<g fill="#fff" stroke="#111" stroke-width="1" stroke-linejoin="round"><path d="M5.800 12.600H13.800L17.800 17H9.800Z"/><path d="M5.800 9.600H13.800L17.800 14H9.800Z"/><path d="M5.800 6.600H13.800L17.800 11H9.800Z"/></g><path d="M10 14.400h8M10 17.400h8" stroke="#111" stroke-width="1.100"/></svg></div>
<div class="ic" style="left:70px;top:82px"><svg viewBox="0 0 24 24"><rect x="3.700" y="3.700" width="16.800" height="16.400" fill="none" stroke="#c3c2c0" stroke-width="1" stroke-dasharray="2.200 1.400"/>
<rect x="6" y="10" width="10.500" height="7.800" fill="#e9e8e6" stroke="#cfcecb" stroke-width="1"/><circle cx="14.300" cy="9.300" r="4.300" fill="#eeedeb" stroke="#cfcecb" stroke-width="1"/><circle cx="14.600" cy="8.800" r="2" fill="none" stroke="#dddcda" stroke-width=".8"/></svg></div>
<i class="sep" style="left:102.0px;top:83px;height:21px"></i>
<div class="ic" style="left:112px;top:82px"><svg viewBox="0 0 24 24"><path d="M10.800 2.600L5.400 6.700 10.800 10.400V8.200C14.200 8.400 15.800 10.600 15.800 13.200 15.800 16 13.500 17.600 11.500 17.600 9.500 17.600 8 16.800 7 15.800L4.400 19C6.200 20.300 8.500 21 11.500 21 16.500 21 20.200 17.500 20.200 13.200 20.200 8.500 16.500 5 10.800 4.800Z" fill="#dddcda" stroke="#d4d3d1" stroke-width=".5"/><circle cx="12" cy="13.300" r="1" fill="#d2d1cf"/></svg></div>
<div class="ic" style="left:142px;top:82px"><svg viewBox="0 0 24 24"><g transform="translate(24,0) scale(-1,1)"><path d="M10.800 2.600L5.400 6.700 10.800 10.400V8.200C14.200 8.400 15.800 10.600 15.800 13.200 15.800 16 13.500 17.600 11.500 17.600 9.500 17.600 8 16.800 7 15.800L4.400 19C6.200 20.300 8.500 21 11.500 21 16.500 21 20.200 17.500 20.200 13.200 20.200 8.500 16.500 5 10.800 4.800Z" fill="#dddcda" stroke="#d4d3d1" stroke-width=".5"/><circle cx="12" cy="13.300" r="1" fill="#d2d1cf"/></g></svg></div>
<div class="ic" style="left:172px;top:82px"><svg viewBox="0 0 24 24"><path d="M2.500 11.500L7.500 7.400V9.800H16.500V7.400L21.500 11.500 16.500 15.600V13.200H7.500V15.600Z" fill="#dddcda" stroke="#d4d3d1" stroke-width=".5"/></svg></div>
<div class="ic" style="left:202.5px;top:82px"><svg viewBox="0 0 24 24"><path d="M12 2.500L16.500 8H14V15.500H16.500L12 21 7.500 15.500H10V8H7.500Z" fill="#dddcda" stroke="#d4d3d1" stroke-width=".5"/></svg></div>
<i class="sep" style="left:234.0px;top:83px;height:21px"></i>
<div class="ic" style="left:244px;top:82px"><svg viewBox="0 0 24 24"><g stroke="#b7b6b3" fill="none"><path d="M13.200 4.200h7.400M13.200 7.600h7.400M13.200 11h7.400M13.200 14.300h7.400" stroke-width="1.700"/><rect x="3.500" y="17.200" width="16.800" height="2.100" fill="#e7e6e4" stroke-width=".9"/><path d="M6.500 3V13" stroke-width="1.100"/></g><path d="M3.800 11.500h5.400L6.500 15.200z" fill="#b7b6b3"/></svg></div>
<div class="ic" style="left:274px;top:82px"><svg viewBox="0 0 24 24"><g stroke="#b7b6b3" fill="none"><path d="M13.200 4.200h7.300M9.700 7.700h10.800M13.200 11h7.300M13.200 18.800h7.300" stroke-width="1.700"/><rect x="3.600" y="13.600" width="16.600" height="2.600" fill="#e7e6e4" stroke-width=".9"/><path d="M6.200 6.500V9.500" stroke-width="1.100"/></g><path d="M3.400 8.800h5.600L6.200 11.800z" fill="#b7b6b3"/></svg></div>
<div class="ic" style="left:304px;top:82px"><svg viewBox="0 0 24 24"><g stroke="#b7b6b3" fill="none"><path d="M3.300 4.200h7.400M3.300 11.200h7.400M3.300 14.800h10.700M3.300 18.500h7.400" stroke-width="1.700"/><rect x="3.700" y="6.600" width="16.600" height="2.300" fill="#e7e6e4" stroke-width=".9"/><path d="M17.800 13.500V16" stroke-width="1.100"/></g><path d="M15.200 14h5.200L17.800 11z" fill="#b7b6b3"/></svg></div>
<div class="ic" style="left:334px;top:82px"><svg viewBox="0 0 24 24"><g stroke="#b7b6b3" fill="none"><path d="M3.100 7.800h7.100M3.100 11.300h7.100M3.100 14.800h7.100M3.100 18.400h7.100" stroke-width="1.700"/><rect x="3.500" y="3.400" width="17" height="2.100" fill="#e7e6e4" stroke-width=".9"/><path d="M17.800 10V19.500" stroke-width="1.100"/></g><path d="M15.100 11h5.400L17.800 7.300z" fill="#b7b6b3"/></svg></div>
<i class="sep" style="left:366.0px;top:83px;height:21px"></i>
<span class="lbl" style="left:381px">X:</span>
<div class="spin" style="left:397px;width:67px"><span class="val">0.000</span><i class="sp"><b class="up"></b><b class="dn"></b></i></div>
<span class="lbl" style="left:474.5px">Y:</span>
<div class="spin" style="left:490.5px;width:66.5px"><span class="val">0.000</span><i class="sp"><b class="up"></b><b class="dn"></b></i></div>
<span class="lbl" style="left:567px">W:</span>
<div class="spin" style="left:587px;width:67px"><span class="val">0.000</span><i class="sp"><b class="up"></b><b class="dn"></b></i></div>
<div class="ic" style="left:659px;top:82px"><svg viewBox="0 0 24 24"><defs><linearGradient id="glk" x1="0" y1="0" x2="1" y2="0"><stop offset="0" stop-color="#fdfbe0"/><stop offset=".6" stop-color="#fbf0a8"/><stop offset="1" stop-color="#eab758"/></linearGradient></defs>
<path d="M9 6.200H13Q14.800 6.200 14.800 8V10.500" fill="none" stroke="#23241c" stroke-width="1.200"/>
<path d="M15 10.300L16.900 15.600 15.200 16.300Z" fill="#6a4a14" stroke="#2a2412" stroke-width=".6"/>
<rect x="8.300" y="10.500" width="6.800" height="5.700" rx=".6" fill="url(#glk)" stroke="#2a2a1e" stroke-width="1.100"/><path d="M11.400 12.200h1.600l-.3 2.200h-1z" fill="#14140c"/></svg></div>
<span class="lbl" style="left:694.5px">H:</span>
<div class="spin" style="left:711px;width:67px"><span class="val">0.000</span><i class="sp"><b class="up"></b><b class="dn"></b></i></div>
<div class="combo" style="left:781.5px"><span>px</span><b class="up"></b><b class="dn"></b></div>
<i class="sep" style="left:837.5px;top:83px;height:21px"></i>
<div class="tbtn" style="left:845px"><svg viewBox="0 0 28 32"><path d="M9.100 11.900H20.050V16.500" fill="none" stroke="#000" stroke-width="1.700"/><path d="M9.100 15.450H16.500V17.700" fill="none" stroke="#000" stroke-width="1.100"/><path d="M10.800 20.500H17.500" stroke="#000" stroke-width="1.300" stroke-dasharray="1.400 1.100" fill="none"/><path d="M17.300 18V23L21.200 20.500Z" fill="#000"/></svg></div>
<div class="tbtn" style="left:875px"><svg viewBox="0 0 28 32"><path d="M9.200 11.700H15.500C19 11.700 20.600 14 20.600 17.300" fill="none" stroke="#000" stroke-width="1.400"/><path d="M9.200 15.200H13.500C16 15.200 17.300 16.800 17.300 18.800" fill="none" stroke="#000" stroke-width="1.100"/><path d="M10.800 20.500H17.500" stroke="#000" stroke-width="1.300" stroke-dasharray="1.400 1.100" fill="none"/><path d="M17.300 18V23L21.200 20.500Z" fill="#000"/></svg></div>
<div class="tbtn" style="left:905px"><svg viewBox="0 0 28 32"><defs><linearGradient id="gaf" x1="0" y1="0" x2="1" y2="1"><stop offset="0" stop-color="#e4ecf5"/><stop offset="1" stop-color="#9db7d6"/></linearGradient></defs><path d="M9 11.500H20.400V16.600H17V17.700H9Z" fill="url(#gaf)"/><path d="M9 11.300H20.450V16.600" fill="none" stroke="#000" stroke-width="1.400"/><path d="M9 14.650H16.500V17.700" fill="none" stroke="#000" stroke-width="1.100"/><path d="M10.800 20.500H17.500" stroke="#000" stroke-width="1.300" stroke-dasharray="1.400 1.100" fill="none"/><path d="M17.300 18V23L21.200 20.500Z" fill="#000"/></svg></div>
<div class="tbtn" style="left:935px"><svg viewBox="0 0 28 32"><path d="M8.800 10.800H20.900V16.600H19.400L18.200 15.200H17.600L15.700 17 13.800 15.200H12.800L10.900 17 9 15.200H8.800Z" fill="#000"/><path d="M13.400 11.400L15.300 13.300 13.400 15.200 11.500 13.300ZM18.200 11.400L20.100 13.300 18.200 15.200 16.300 13.300Z" fill="#f1f0ef"/><path d="M10.800 20.500H17.500" stroke="#000" stroke-width="1.300" stroke-dasharray="1.400 1.100" fill="none"/><path d="M17.300 18V23L21.200 20.500Z" fill="#000"/></svg></div>
</div>
<div id="toolbox">
<div class="selbtn" style="left:8px;top:114px;width:29.5px;height:29.5px"></div>
<div class="ic" style="left:11px;top:117px"><svg viewBox="0 0 24 24"><path d="M6.300 3.800L6.700 19.300 10.300 16.800 13.800 22 16.900 20.300 13.800 15.300 17.300 14.400Z" fill="#000"/></svg></div>
<div class="ic" style="left:11px;top:149px"><svg viewBox="0 0 24 24"><path d="M6.500 6.500C11 2.800 16 2.200 21.500 2.400M6.500 6.500C2.800 11 2.300 16 2.500 21" fill="none" stroke="#8a8a8a" stroke-width="1.100"/>
<rect x="3.700" y="3.600" width="5.800" height="5.800" fill="#6a6ae6" stroke="#0e0ec8" stroke-width="1.400"/><path d="M5 8L8.200 4.800" stroke="#c9c9f5" stroke-width="1"/>
<rect x="19.900" y=".6" width="3.700" height="3.700" fill="#c9c6f0" stroke="#5a5ae0" stroke-width=".9"/><rect x=".5" y="19.500" width="3.700" height="3.700" fill="#c9c6f0" stroke="#5a5ae0" stroke-width=".9"/>
<path d="M8.900 9.400L20.700 16.500 16.100 21.800Z" fill="#000"/></svg></div>
<div class="ic" style="left:11px;top:181px"><svg viewBox="0 0 24 24"><defs><linearGradient id="gtw" x1="0" y1="0" x2="0" y2="1"><stop offset="0" stop-color="#e6e6e5"/><stop offset=".3" stop-color="#b4b4b2"/><stop offset=".58" stop-color="#747472"/><stop offset=".66" stop-color="#8c8c8a"/><stop offset="1" stop-color="#cacac8"/></linearGradient><clipPath id="ctw"><path d="M1.200 13.100H4.800C6.500 12.500 7.200 11 7.700 9.300C8.300 7 8.800 5.500 9.700 3.900C10.500 2.300 11.500 1.300 12.900 1.200H16.900C18.300 1.400 19.300 2.300 19.600 3.400C20 4.500 20.300 5.600 20.100 6.600C19.800 7.400 19.200 7.800 18.500 7.700C18.300 6.800 17.900 6.200 17.400 5.700C16.900 4.900 16.300 4.400 15.600 4.300C14.700 4.400 13.900 4.900 13.500 5.700C13 6.800 12.900 8 13.100 9.300C13.400 10.500 14 11.600 14.900 12.400C15.600 13 16.400 13.400 17.400 13.500H22.500V22.300H2.100V13.100Z"/></clipPath></defs>
<path d="M1.200 13.100H4.800C6.500 12.500 7.200 11 7.700 9.300C8.300 7 8.800 5.500 9.700 3.900C10.500 2.300 11.500 1.300 12.900 1.200H16.900C18.300 1.400 19.300 2.300 19.600 3.400C20 4.500 20.300 5.600 20.100 6.600C19.800 7.400 19.200 7.800 18.500 7.700C18.300 6.800 17.900 6.200 17.400 5.700C16.900 4.900 16.300 4.400 15.600 4.300C14.700 4.400 13.900 4.900 13.500 5.700C13 6.800 12.900 8 13.100 9.300C13.400 10.500 14 11.600 14.900 12.400C15.600 13 16.400 13.400 17.400 13.500H22.500V22.300H2.100V13.100Z" fill="url(#gtw)"/>
<path d="M1.200 13.100H4.800C6.500 12.500 7.200 11 7.700 9.300C8.300 7 8.800 5.500 9.700 3.900C10.500 2.300 11.500 1.300 12.900 1.200H16.900C18.300 1.400 19.300 2.300 19.600 3.400C20 4.500 20.300 5.600 20.100 6.600C19.800 7.400 19.200 7.800 18.500 7.700C18.300 6.800 17.900 6.200 17.400 5.700C16.900 4.900 16.300 4.400 15.600 4.300C14.700 4.400 13.900 4.900 13.500 5.700C13 6.800 12.900 8 13.100 9.300C13.400 10.500 14 11.600 14.900 12.400C15.600 13 16.400 13.400 17.400 13.500H22.500" fill="none" stroke="#6a6a68" stroke-width="4.200" stroke-linejoin="round" clip-path="url(#ctw)"/>
<path d="M1.200 13.100H4.800C6.500 12.500 7.200 11 7.700 9.300C8.300 7 8.800 5.500 9.700 3.900C10.500 2.300 11.500 1.300 12.900 1.200H16.900C18.300 1.400 19.300 2.300 19.600 3.400C20 4.500 20.300 5.600 20.100 6.600C19.800 7.400 19.200 7.800 18.500 7.700C18.300 6.800 17.900 6.200 17.400 5.700C16.900 4.900 16.300 4.400 15.600 4.300C14.700 4.400 13.900 4.900 13.500 5.700C13 6.800 12.900 8 13.100 9.300C13.400 10.500 14 11.600 14.900 12.400C15.600 13 16.400 13.400 17.400 13.500H22.500" fill="none" stroke="#fdfdfc" stroke-width="3.100" stroke-linejoin="round" clip-path="url(#ctw)"/>
<path d="M1.200 13.100H4.800C6.500 12.500 7.200 11 7.700 9.300C8.300 7 8.800 5.500 9.700 3.900C10.500 2.300 11.500 1.300 12.900 1.200H16.900C18.300 1.400 19.300 2.300 19.600 3.400C20 4.500 20.300 5.600 20.100 6.600C19.800 7.400 19.200 7.800 18.500 7.700C18.300 6.800 17.900 6.200 17.400 5.700C16.900 4.900 16.300 4.400 15.600 4.300C14.700 4.400 13.900 4.900 13.500 5.700C13 6.800 12.900 8 13.100 9.300C13.400 10.500 14 11.600 14.900 12.400C15.600 13 16.400 13.400 17.400 13.500H22.500" fill="none" stroke="#2a2a2a" stroke-width="1.300" stroke-linejoin="round"/></svg></div>
<div class="ic" style="left:11px;top:213px"><svg viewBox="0 0 24 24"><defs><linearGradient id="gzt" x1="0" y1="0" x2="1" y2="1"><stop offset="0" stop-color="#f1f5f9"/><stop offset=".6" stop-color="#cfdeec"/><stop offset="1" stop-color="#a8c3dd"/></linearGradient></defs>
<path d="M13.500 13.800L16 16.200" stroke="#333" stroke-width="2.400"/><path d="M15.600 15.800L21.500 20.700" stroke="#6b4a12" stroke-width="4.600" stroke-linecap="round"/><path d="M15.800 16L21.400 20.600" stroke="#f2a93a" stroke-width="3.200" stroke-linecap="round"/><path d="M16.300 15.400L21.900 20" stroke="#f8d48f" stroke-width="1" stroke-linecap="round"/>
<circle cx="8.300" cy="8.400" r="7.200" fill="url(#gzt)" stroke="#20242a" stroke-width="1.400"/></svg></div>
<div class="ic" style="left:11px;top:245px"><svg viewBox="0 0 24 24"><defs><linearGradient id="gms" x1="0" y1="0" x2="1" y2="0"><stop offset="0" stop-color="#fbe3dd"/><stop offset="1" stop-color="#f2b9ad"/></linearGradient></defs>
<g transform="rotate(-29.500 10.500 12)"><rect x="4.600" y="2.200" width="11.500" height="19.600" fill="url(#gms)" stroke="#1a1a1a" stroke-width="1.400"/><path d="M5 4.600h4M5 7.100h2.600M5 9.600h4M5 12.100h2.600M5 14.600h4M5 17.100h2.600M5 19.600h4" stroke="#1a1a1a" stroke-width="1"/></g></svg></div>
<div class="ic" style="left:11px;top:277px"><svg viewBox="0 0 24 24"><defs><linearGradient id="grc" x1="0" y1="0" x2="1" y2="1"><stop offset="0" stop-color="#d9e3ee"/><stop offset=".5" stop-color="#b7c9dd"/><stop offset="1" stop-color="#8da8c6"/></linearGradient></defs>
<rect x="2.800" y="2.800" width="18.600" height="18.400" fill="url(#grc)" stroke="#0c0c0c" stroke-width="1.300"/><rect x="4" y="4" width="16.200" height="16" fill="none" stroke="#fff" stroke-opacity=".75" stroke-width=".9"/></svg></div>
<div class="ic" style="left:11px;top:309px"><svg viewBox="0 0 24 24"><defs><linearGradient id="gbx" x1="0" y1="0" x2="1" y2="1"><stop offset="0" stop-color="#b9b9e4"/><stop offset="1" stop-color="#7c7cc0"/></linearGradient><linearGradient id="gbx2" x1="0" y1="0" x2="0" y2="1"><stop offset="0" stop-color="#3c3c90"/><stop offset="1" stop-color="#7070b8"/></linearGradient></defs>
<path d="M2.600 5L14 .5 10.400 14 2.600 17Z" fill="url(#gbx)"/><path d="M14 .5L22.400 8.500V18.800L10.400 14Z" fill="#dedef6"/><path d="M10.400 14L22.400 18.800 11 23 2.600 17Z" fill="url(#gbx2)"/><path d="M14 .5L10.400 14" stroke="#ececfa" stroke-width=".8"/>
<path d="M2.600 5L14 .5 22.400 8.500V18.800L11 23 2.600 17Z" fill="none" stroke="#30303c" stroke-width="1.100" stroke-linejoin="round"/></svg></div>
<div class="ic" style="left:11px;top:341px"><svg viewBox="0 0 24 24"><defs><linearGradient id="gel" x1="0" y1="0" x2="1" y2="1"><stop offset="0" stop-color="#fef1f1"/><stop offset=".5" stop-color="#fad5d7"/><stop offset="1" stop-color="#f3a9ae"/></linearGradient></defs>
<circle cx="12" cy="12" r="9.400" fill="url(#gel)" stroke="#0c0c0c" stroke-width="1.300"/><circle cx="12" cy="12" r="8.300" fill="none" stroke="#fff" stroke-opacity=".6" stroke-width=".8"/></svg></div>
<div class="ic" style="left:11px;top:373px"><svg viewBox="0 0 24 24"><defs><linearGradient id="gst" x1="0" y1="0" x2="1" y2="1"><stop offset="0" stop-color="#fdfad0"/><stop offset="1" stop-color="#f3e566"/></linearGradient></defs><path d="M7.900 1.700L14.500 6.300 12 16.100H3.200L.7 6.800Z" fill="url(#gst)" stroke="#2a2a22" stroke-width="1.100" stroke-linejoin="round"/><path d="M16.4 5.3L17.9 11.2L23.7 12.9L18.6 16.2L18.7 22.3L14.1 18.4L8.3 20.5L10.5 14.8L6.9 10.0L12.9 10.3Z" fill="url(#gst)" stroke="#1c1c16" stroke-width="1.100" stroke-linejoin="round"/></svg></div>
<div class="ic" style="left:11px;top:405px"><svg viewBox="0 0 24 24"><path d="M11.6 12.2L11.8 12.2L11.9 12.3L12.1 12.4L12.2 12.5L12.4 12.7L12.5 12.9L12.6 13.2L12.7 13.4L12.7 13.7L12.7 14.0L12.6 14.3L12.5 14.6L12.4 14.9L12.2 15.2L11.9 15.5L11.7 15.7L11.4 15.9L11.0 16.1L10.6 16.2L10.2 16.2L9.8 16.2L9.4 16.2L9.0 16.0L8.6 15.8L8.2 15.6L7.8 15.2L7.5 14.8L7.2 14.4L6.9 13.9L6.8 13.3L6.6 12.7L6.6 12.1L6.6 11.5L6.7 10.9L6.9 10.2L7.1 9.6L7.5 9.0L7.9 8.5L8.3 8.0L8.9 7.6L9.5 7.2L10.1 7.0L10.8 6.8L11.5 6.7L12.2 6.7L13.0 6.8L13.7 7.1L14.4 7.4L15.1 7.9L15.7 8.4L16.3 9.1L16.8 9.8L17.2 10.6L17.5 11.5L17.7 12.4L17.8 13.3L17.8 14.3L17.7 15.3L17.5 16.3L17.1 17.2L16.7 18.1L16.1 19.0L15.4 19.8L14.6 20.4L13.8 21.0L12.9 21.5L11.9 21.8L10.9 22.0L9.8 22.0L8.8 21.9L7.7 21.6L6.7 21.2L5.7 20.7L4.8 20.0L3.9 19.1L3.2 18.2L2.6 17.1L2.0 15.9L1.7 14.7L1.4 13.4L1.3 12.1L1.4 10.7L1.6 9.4L2.0 8.1L2.5 6.8L3.2 5.6L4.0 4.5L5.0 3.5L6.1 2.7L7.2 2.0L8.5 1.4L9.8 1.1L11.2 0.9L12.6 0.9L14.0 1.1L15.3 1.5L16.6 2.2L17.9 2.9L19.0 3.9L20.1 5.0L21.0 6.3L21.8 7.7L22.4 9.3L22.8 10.9L23.1 12.5L23.1 14.3L23.0 16.0L22.6 17.7L22.1 19.3L21.3 20.9L20.4 22.4" fill="none" stroke="#1e1e1e" stroke-width="1.200" stroke-linecap="round" stroke-linejoin="round"/></svg></div>
<div class="ic" style="left:11px;top:437px"><svg viewBox="0 0 24 24"><defs><linearGradient id="gpc" x1="0" y1="0" x2="1" y2=".35"><stop offset="0" stop-color="#fdf08a"/><stop offset=".5" stop-color="#fbc02a"/><stop offset="1" stop-color="#ee9a1c"/></linearGradient><linearGradient id="gpc2" x1="0" y1="0" x2="1" y2=".5"><stop offset="0" stop-color="#ffffff"/><stop offset=".55" stop-color="#fdf3c8"/><stop offset="1" stop-color="#f2b040"/></linearGradient></defs>
<path d="M1.200 1.400H5.600Q7.200 1.500 6.500 3.200L1.400 11.300H7.200Q8.800 11.600 8.500 13.500L7.200 17.400C6.800 19.500 7.200 20.800 8.300 21.800C10 23.300 12.500 23.700 14.500 23.300C17.500 22.700 20 20.500 21 17.400" fill="none" stroke="#141414" stroke-width="1.200" stroke-linejoin="round" stroke-linecap="round"/>
<path d="M15.300 .3L22.500 6.100 19.600 12.900C18.500 10.500 14 9.300 11.500 10.200Z" fill="url(#gpc)"/>
<path d="M11.500 10.200C14 9.300 18.500 10.500 19.600 12.900L12.500 21 11.500 20.500Z" fill="url(#gpc2)"/>
<path d="M11.500 10.200C14 9.300 18.500 10.500 19.600 12.900" fill="none" stroke="#c77a14" stroke-width=".7"/>
<path d="M11.400 17.600L13.700 19.300 11.800 21.200Z" fill="#0c0c0c"/>
<path d="M15.300 .3L11.500 10.200V20.500" fill="none" stroke="#0c0c0c" stroke-width="1.100" stroke-linejoin="round"/><path d="M22.500 6.100L19.600 12.900 12.500 21" fill="none" stroke="#0c0c0c" stroke-width="1.100" stroke-linejoin="round"/></svg></div>
<div class="ic" style="left:11px;top:469px"><svg viewBox="0 0 24 24"><defs><linearGradient id="gpn" x1="0" y1=".2" x2="1" y2=".6"><stop offset="0" stop-color="#bfe0ec"/><stop offset=".45" stop-color="#7fb0d4"/><stop offset="1" stop-color="#25468c"/></linearGradient></defs>
<path d="M1.400 1.400H13.800M1.400 1.400C4 3.500 7.500 8 9.300 12.900C10 15 10 17.500 8.500 19.500C7.500 20.700 6 21.300 4.800 21.400" fill="none" stroke="#141414" stroke-width="1.150"/><path d="M4.800 22.500H10.500" stroke="#141414" stroke-width="1.100"/>
<rect x=".85" y="19.950" width="3.500" height="3.500" fill="#fff" stroke="#000" stroke-width="1.100"/><circle cx="11.500" cy="22.500" r="1" fill="#fff" stroke="#000" stroke-width=".9"/>
<path d="M16.700 .2L23.900 6.300 21 11.700 13.300 7.700Z" fill="url(#gpn)"/><path d="M16.700 .2L13.300 7.700" stroke="#16223a" stroke-width="1"/><path d="M13.300 7.700L21 11.700" stroke="#1a2c50" stroke-width=".8"/>
<path d="M14.200 9.800L19.600 12.600 18 14.500 14.300 13Z" fill="#f6e29a" stroke="#2a2416" stroke-width=".7"/>
<path d="M14.700 13.300L17.300 14.500 13.400 20.300 12.200 20Z" fill="#e8e8e6" stroke="#1c1c1c" stroke-width=".9" stroke-linejoin="round"/><path d="M15.900 14L12.800 20.100" stroke="#1c1c1c" stroke-width=".6"/></svg></div>
<div class="ic" style="left:11px;top:501px"><svg viewBox="0 0 24 24"><defs><linearGradient id="gcl" x1="0" y1="0" x2="1" y2="0"><stop offset="0" stop-color="#fffdf0"/><stop offset=".45" stop-color="#fbe88a"/><stop offset="1" stop-color="#e9ae24"/></linearGradient><linearGradient id="gcl2" x1="0" y1="0" x2="1" y2="0"><stop offset="0" stop-color="#b9d2ea"/><stop offset="1" stop-color="#3f78b8"/></linearGradient></defs>
<path d="M0 0C3 .2 5.500 .5 7 1.200C8.500 2 9.200 3 9.100 5C9 8 8.600 10 7.800 13C7.200 15.500 7 17.500 7.400 19.300C7.800 20.800 8.800 22 10.500 22.300C13 22.600 15 21.500 17 20.300C19 19 21.500 18.300 23.300 19.600C21.500 19.300 19.500 20 17.500 21.300C15.500 22.700 13 23.800 10.500 23.600C7.500 23.300 4.500 21 3.300 17.500C2.300 14.500 2.300 11 2.600 8C2.900 5 3 2 0 0Z" fill="#0c0c0c"/>
<path d="M13.800 6.600L19.200 8.400 20 12.900 10.600 20 10.200 11.500Z" fill="url(#gcl)" stroke="#111" stroke-width="1.100" stroke-linejoin="round"/><circle cx="13.800" cy="12" r="1.300" fill="#0c0c0c"/><path d="M13.600 12.500L10.800 19.600" stroke="#111" stroke-width=".8"/>
<path d="M14.200 4.200L21.600 6.200 20.400 8.900 13.600 6.700Z" fill="#7a2a30"/><path d="M15.600 .7L23.700 2.500 22.100 6.300 14.400 4.300Z" fill="url(#gcl2)"/><path d="M15.300 .5L13.400 6.500" stroke="#e8f0f8" stroke-width=".9"/><path d="M23.700 2.500L20.400 8.900" stroke="#222" stroke-width=".8"/></svg></div>
<div class="ic" style="left:11px;top:533px"><svg viewBox="0 0 24 24"><text x="10.700" y="21.100" text-anchor="middle" font-family="Liberation Sans,DejaVu Sans,sans-serif" font-weight="bold" font-size="25.400" fill="#111" stroke="#111" stroke-width=".5">A</text><path d="M18.500 1.500H19.500Q20.500 1.500 20.500 2.500V21Q20.500 22.200 19.500 22.200H18.500M22.500 1.500H21.500Q20.500 1.500 20.500 2.500M20.500 21Q20.500 22.200 21.500 22.200H22.500" fill="none" stroke="#333" stroke-width=".9"/></svg></div>
<div class="ic" style="left:11px;top:565px"><svg viewBox="0 0 24 24"><defs><linearGradient id="gsp" x1="0" y1="0" x2="1" y2=".15"><stop offset="0" stop-color="#3d8f1e"/><stop offset=".35" stop-color="#6cba34"/><stop offset=".7" stop-color="#8fd152"/><stop offset=".82" stop-color="#c4ec98"/><stop offset="1" stop-color="#3f8a20"/></linearGradient></defs>
<path d="M12.400 10.400L19.600 9.300 21.900 12.900 23.900 21.400 21.400 22.500 16.500 22.300 11.500 19.600 11.100 13.300Z" fill="url(#gsp)"/><path d="M12.400 10.400L11.100 13.300 11.500 19.600" fill="none" stroke="#1c3a0e" stroke-width="1"/><path d="M19.600 9.300L21.900 12.900 23.900 21.400" fill="none" stroke="#24450f" stroke-width=".9"/>
<path d="M12.900 9.500V7.500Q13 5.300 15.600 5.300Q18.200 5.300 18.300 7.500V9.200Z" fill="#fbfbfa" stroke="#141414" stroke-width="1.100"/><path d="M13.100 10.100L18.800 9.700" stroke="#e6b84a" stroke-width="1.500"/>
<g fill="#0c0c0c"><circle cx="3.900" cy="2.700" r="1.150"/><circle cx="2.700" cy="7" r="1.150"/><circle cx="4.500" cy="11.700" r="1.150"/><circle cx="7.200" cy="4.100" r=".75"/><circle cx="6.300" cy="7.200" r=".75"/><circle cx="7.700" cy="9.900" r=".75"/></g>
<g fill="#7d7d7b"><circle cx="9.500" cy="5.200" r=".55"/><circle cx="8.800" cy="7.700" r=".55"/><circle cx="5.200" cy="9.500" r=".5"/><circle cx="4.500" cy="5.200" r=".5"/><circle cx="10.800" cy="6.600" r=".5"/><circle cx="10" cy="8.600" r=".45"/></g></svg></div>
<div class="ic" style="left:11px;top:597px"><svg viewBox="0 0 24 24"><defs><linearGradient id="ger" x1=".6" y1="0" x2=".4" y2="1"><stop offset="0" stop-color="#f6f8ec"/><stop offset=".2" stop-color="#fbecea"/><stop offset=".5" stop-color="#fbd0d2"/><stop offset="1" stop-color="#f7bc9a"/></linearGradient></defs>
<path d="M11.500 .6L20.700 5.900 11.500 22.400 2.200 16.600Z" fill="url(#ger)" stroke="#1c1512" stroke-width="1.300" stroke-linejoin="round"/><path d="M11.900 2.300L19 6.400 11.100 20.600 3.900 16.200Z" fill="none" stroke="#fff" stroke-opacity=".7" stroke-width=".8" stroke-linejoin="round"/></svg></div>
</div>
<svg id="hr" width="1101" height="16" viewBox="56 112 1101 16" style="left:56px;top:112px"><path d="M57 126.5H1156" stroke="#2b2b2b" stroke-width="1" fill="none"/><path d="M64.5 123V126M72.5 121V126M81.5 123V126M90.5 121V126M99.5 123V126M107.5 121V126M116.5 123V126M125.5 114V126M134.5 123V126M142.5 121V126M151.5 123V126M160.5 121V126M169.5 123V126M177.5 121V126M186.5 123V126M195.5 121V126M204.5 123V126M213.5 114V126M221.5 123V126M230.5 121V126M239.5 123V126M248.5 121V126M256.5 123V126M265.5 121V126M274.5 123V126M283.5 121V126M291.5 123V126M300.5 114V126M309.5 123V126M318.5 121V126M326.5 123V126M335.5 121V126M344.5 123V126M353.5 121V126M361.5 123V126M370.5 121V126M379.5 123V126M388.5 114V126M396.5 123V126M405.5 121V126M414.5 123V126M423.5 121V126M431.5 123V126M440.5 121V126M449.5 123V126M458.5 121V126M466.5 123V126M475.5 114V126M484.5 123V126M493.5 121V126M501.5 123V126M510.5 121V126M519.5 123V126M528.5 121V126M536.5 123V126M545.5 121V126M554.5 123V126M563.5 114V126M571.5 123V126M580.5 121V126M589.5 123V126M598.5 121V126M606.5 123V126M615.5 121V126M624.5 123V126M633.5 121V126M641.5 123V126M650.5 114V126M659.5 123V126M668.5 121V126M676.5 123V126M685.5 121V126M694.5 123V126M703.5 121V126M711.5 123V126M720.5 121V126M729.5 123V126M738.5 114V126M746.5 123V126M755.5 121V126M764.5 123V126M773.5 121V126M781.5 123V126M790.5 121V126M799.5 123V126M808.5 121V126M816.5 123V126M825.5 114V126M834.5 123V126M843.5 121V126M851.5 123V126M860.5 121V126M869.5 123V126M878.5 121V126M886.5 123V126M895.5 121V126M904.5 123V126M913.5 114V126M922.5 123V126M930.5 121V126M939.5 123V126M948.5 121V126M957.5 123V126M965.5 121V126M974.5 123V126M983.5 121V126M992.5 123V126M1000.5 114V126M1009.5 123V126M1018.5 121V126M1027.5 123V126M1035.5 121V126M1044.5 123V126M1053.5 121V126M1062.5 123V126M1070.5 121V126M1079.5 123V126M1088.5 114V126M1097.5 123V126M1105.5 121V126M1114.5 123V126M1123.5 121V126M1132.5 123V126M1140.5 121V126M1149.5 123V126" stroke="#2b2b2b" stroke-width="1" fill="none"/><text x="40.3" y="122.2">-1250</text><text x="127.8" y="122.2">-1000</text><text x="215.3" y="122.2">-750</text><text x="302.8" y="122.2">-500</text><text x="390.4" y="122.2">-250</text><text x="477.9" y="122.2">0</text><text x="565.4" y="122.2">250</text><text x="653.0" y="122.2">500</text><text x="740.5" y="122.2">750</text><text x="828.0" y="122.2">1000</text><text x="915.5" y="122.2">1250</text><text x="1003.1" y="122.2">1500</text><text x="1090.6" y="122.2">1750</text><path d="M1132 122.5h8l-4 4z" fill="#333"/></svg>
<svg id="vr" width="17" height="496" viewBox="39 126 17 496" style="left:39px;top:126px"><path d="M55.5 128V622" stroke="#2b2b2b" stroke-width="1" fill="none"/><path d="M52 619.5H55M43 602.5H55M52 584.5H55M50 567.5H55M52 549.5H55M50 532.5H55M52 514.5H55M50 497.5H55M52 479.5H55M50 462.5H55M52 444.5H55M43 427.5H55M52 409.5H55M50 392.5H55M52 374.5H55M50 357.5H55M52 339.5H55M50 322.5H55M52 304.5H55M50 287.5H55M52 269.5H55M43 252.5H55M52 234.5H55M50 217.5H55M52 199.5H55M50 182.5H55M52 164.5H55M50 147.5H55M52 129.5H55" stroke="#2b2b2b" stroke-width="1" fill="none"/><text x="43" y="610.6">0</text><text x="43" y="435.6">5</text><text x="43" y="444.7">0</text><text x="43" y="453.8">0</text><text x="43" y="260.6">1</text><text x="43" y="269.7">0</text><text x="43" y="278.8">0</text><text x="43" y="287.9">0</text></svg>
<div id="canvas"><div id="page"></div></div>
<div id="zoombtn"><svg viewBox="0 0 16 16"><path d="M6.200 6.200L8.300 4.300H9.800V11.700H7.400V6.800L6.200 7.500Z" fill="#f4f4f3" stroke="#8a8a88" stroke-width=".9" stroke-linejoin="round"/></svg></div>
<div id="vscroll"><b class="up"></b><div id="trough"></div></div><div id="thumb"><i></i><i></i><i></i></div>
<i class="vsep" style="left:1187px;top:112px;height:510px"></i>
<div id="grip"><i></i><i></i><i></i></div>
<svg id="snapbar" width="34" height="510" viewBox="1187 112 34 510" style="position:absolute;left:1187px;top:112px;display:block"><defs><linearGradient id="gsb" x1="0" y1="0" x2="0" y2="1"><stop offset="0" stop-color="#ecebe9"/><stop offset="1" stop-color="#dad9d6"/></linearGradient><linearGradient id="gsw" x1="0" y1="0" x2="0" y2="1"><stop offset="0" stop-color="#ffffff"/><stop offset="1" stop-color="#eeedec"/></linearGradient><g id="snp"><path d="M1.800 1.800L8.600 8.600" stroke="#000" stroke-width="1.500" fill="none"/><path d="M9.300 4.800L9.600 9.800 4.600 9.300Z" fill="#000"/><path d="M0 -3L3 0 0 3 -3 0Z" fill="#b9b9f6" stroke="#1212dc" stroke-width="1.200"/><path d="M11 8.200L14 11.200 11 14.200 8 11.200Z" fill="#a9c8d4" stroke="#2a8a34" stroke-width="1.200"/></g></defs><rect x="1191.500" y="114.5" width="27" height="26.3" rx="4.500" fill="url(#gsb)" stroke="#b3b1ac" stroke-width="1"/><use href="#snp" x="1200.200" y="123.200"/><path d="M1195.500 148.5H1214.500" stroke="#dddbd8" stroke-width="1"/><path d="M1195.500 149.5H1214.500" stroke="#fafaf9" stroke-width="1"/><use href="#snp" x="1198.900" y="163.900"/><path d="M1211.500 191.700V206.400H1197" stroke="#bdbcb9" stroke-width="1" fill="none" stroke-dasharray="2 1.200"/><path d="M1210.900 221.800V233.500M1207.800 236.400H1196.300" stroke="#bdbcb9" stroke-width="1" fill="none" stroke-dasharray="2 1.200"/><path d="M1210.900 233.400L1213.900 236.400 1210.900 239.400 1207.900 236.400Z" fill="none" stroke="#c6c5c2" stroke-width=".9"/><path d="M1209.900 258.500V265.400H1196.300" stroke="#bdbcb9" stroke-width="1" fill="none" stroke-dasharray="2 1.200"/><path d="M1209.900 251.500V253.500" stroke="#bdbcb9" stroke-width="1" fill="none" stroke-dasharray="2 1.200"/><ellipse cx="1209.900" cy="256" rx="1.700" ry="2.300" fill="#dedddb" stroke="#c6c5c2" stroke-width=".9"/><path d="M1210.700 280.800V295.200H1197" stroke="#bdbcb9" stroke-width="1" fill="none" stroke-dasharray="2 1.200"/><circle cx="1200.600" cy="286" r="1.700" fill="none" stroke="#bdbcba" stroke-width=".9"/><path d="M1195.500 310H1214.500" stroke="#dddbd8" stroke-width="1"/><path d="M1195.500 311H1214.500" stroke="#fafaf9" stroke-width="1"/><rect x="1191.500" y="318.7" width="27" height="26.3" rx="4.500" fill="url(#gsb)" stroke="#b3b1ac" stroke-width="1"/><use href="#snp" x="1200.200" y="327.100"/><path d="M1197.100 354.500C1202 355.200 1206 357 1207.400 360.500C1208.300 363 1207.300 366 1205.300 368.500C1209.300 368.600 1212.300 366.500 1213.300 362.700" fill="none" stroke="#1f8a22" stroke-width="1.500" stroke-linecap="round" stroke-linejoin="round"/><path d="M1197.100 399.600L1213.300 383.400M1197.100 393.700L1213.300 389" stroke="#3c3c3c" stroke-width="1.100" fill="none"/><circle cx="1205.100" cy="391.400" r="2.100" fill="#3a8f52" stroke="#1f7a2a" stroke-width="1"/><path d="M1196.300 413.700C1201 414.200 1205.500 416 1207.300 419.800C1208.300 422.500 1208 424.800 1207 427.200C1210 426.500 1212.200 424.200 1212.700 420.800" fill="none" stroke="#6a6a6a" stroke-width="1.100"/><path d="M1204.300 423.900L1207.500 427.100 1204.300 430.300 1201.100 427.100Z" fill="#9fb4cf" stroke="#1f8a22" stroke-width="1.300"/><path d="M1196.300 443.400C1199 443.700 1201 444.500 1203 445.800C1206 447.300 1207.800 449 1207.600 451.500C1207.400 454 1206.200 455.800 1205 457.400C1209 457 1212 455 1212.800 451.300" fill="none" stroke="#5a5a5a" stroke-width="1.100"/><rect x="1201.900" y="444.200" width="4.600" height="4.600" fill="#9fb4cf" stroke="#1f8a22" stroke-width="1.300"/><path d="M1197.900 490.200L1212.800 474.200" stroke="#c62222" stroke-width="1.200"/><path d="M1198.300 485.500L1200.100 490.500M1200.300 483.900L1202.100 488.900M1208.300 474.800L1210.100 479.800M1210.300 472.800L1212.100 477.800" stroke="#c62222" stroke-width="1.200"/><circle cx="1205.100" cy="482.500" r="2.200" fill="#5a9f8a" stroke="#1f8a22" stroke-width="1.100"/><path d="M1195.500 502H1214.500" stroke="#dddbd8" stroke-width="1"/><path d="M1195.500 503H1214.500" stroke="#fafaf9" stroke-width="1"/><rect x="1191.500" y="510.6" width="27" height="26.3" rx="4.500" fill="url(#gsb)" stroke="#b3b1ac" stroke-width="1"/><use href="#snp" x="1200.200" y="519.100"/><path d="M1210.600 545.400V558.800H1196.400" fill="none" stroke="#5a5a5a" stroke-width="1.100"/><path d="M1211.500 546.400V559.700H1197.400" fill="none" stroke="#d0d0ce" stroke-width=".8"/><circle cx="1202.300" cy="550.500" r="1.800" fill="#cfe6cf" stroke="#1f8a22" stroke-width="1.100"/><rect x="1191.500" y="571.1" width="27" height="25.6" rx="4.500" fill="url(#gsw)" stroke="#b3b1ac" stroke-width="1"/><path d="M1198.300 580.600H1205.500M1201.900 577V584.200" stroke="#111" stroke-width="1.300"/><path d="M1210.600 575.500V588.900H1196.800" fill="none" stroke="#111" stroke-width="1.200" stroke-dasharray="1.600 1.100"/><text x="1207.200" y="619.800" text-anchor="middle" font-family="Liberation Sans,DejaVu Sans,sans-serif" font-weight="bold" font-size="20.300" fill="#111" stroke="#111" stroke-width=".5">A</text><path d="M1199 619.300H1213" stroke="#1f8a22" stroke-width="1.200"/><circle cx="1198.800" cy="619.400" r="1.900" fill="#9fcf9f" stroke="#1f8a22" stroke-width="1.100"/></svg>
</body></html>
